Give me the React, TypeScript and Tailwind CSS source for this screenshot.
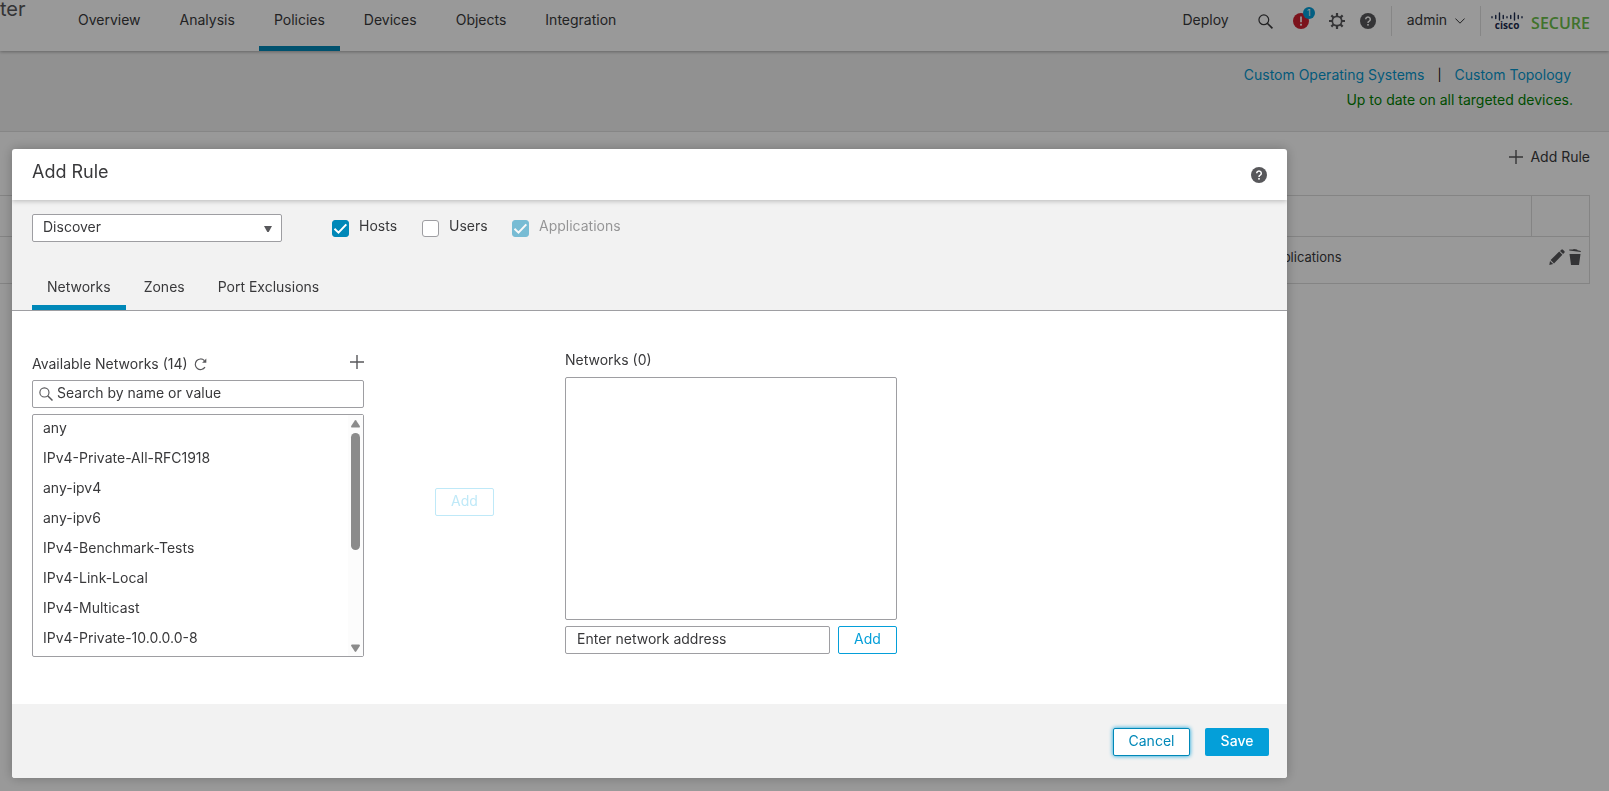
import { useState } from "react";

const navItems = ["Overview", "Analysis", "Policies", "Devices", "Objects", "Integration"];
const tabs = ["Networks", "Zones", "Port Exclusions"];
const networks = [
  "any",
  "IPv4-Private-All-RFC1918",
  "any-ipv4",
  "any-ipv6",
  "IPv4-Benchmark-Tests",
  "IPv4-Link-Local",
  "IPv4-Multicast",
  "IPv4-Private-10.0.0.0-8",
];

const SearchIcon = ({ className }: { className: string }) => (
  <svg viewBox="0 0 16 16" className={className} fill="none" stroke="currentColor">
    <circle cx="6.2" cy="6.2" r="5.2" strokeWidth="1.3" />
    <path d="M9.9 9.9 15.4 15.4" strokeWidth="1.7" />
  </svg>
);

const PlusIcon = () => (
  <svg viewBox="0 0 14 14" className="size-[14px] text-[#58585b]" fill="none" stroke="currentColor" strokeWidth="1.4">
    <path d="M7 0v14M0 7h14" />
  </svg>
);

const HelpIcon = () => (
  <svg viewBox="0 0 16 16" className="size-4 text-[#58585b]">
    <circle cx="8" cy="8" r="8" fill="currentColor" />
    <path d="M5.7 6.2a2.3 2.2 0 1 1 3.5 1.9C8.3 8.6 8 8.9 8 9.9" fill="none" stroke="#fff" strokeWidth="1.5" />
    <rect x="7.2" y="11" width="1.6" height="1.6" fill="#fff" />
  </svg>
);

const GearIcon = () => (
  <svg viewBox="0 0 16 16" className="size-4 text-[#58585b]" fill="none" stroke="currentColor">
    <circle cx="8" cy="8" r="4.7" strokeWidth="1.7" />
    <path
      d="M8 0v3M8 13v3M0 8h3M13 8h3M2.35 2.35l2.1 2.1M11.55 11.55l2.1 2.1M13.65 2.35l-2.1 2.1M4.45 11.55l-2.1 2.1"
      strokeWidth="2.2"
    />
  </svg>
);

const AlertIcon = () => (
  <svg viewBox="0 0 16 16" className="size-4">
    <circle cx="8" cy="8" r="8" fill="#cf2030" />
    <path d="M8 3.5v5.7" stroke="#fff" strokeWidth="1.7" />
    <rect x="7.1" y="10.8" width="1.8" height="1.8" fill="#fff" />
  </svg>
);

const CiscoBars = () => (
  <svg viewBox="0 0 32 9" className="h-[9px] w-8" stroke="#1b2a4e" strokeWidth="1.4" strokeLinecap="round">
    <path d="M1 4.8v1M4.75 3.5v3M8.5 1v7M12.25 3.5v3M16 4.8v1M19.75 3.5v3M23.5 1v7M27.25 3.5v3M31 4.8v1" />
  </svg>
);

const Header = () => (
  <header className="relative flex h-[51px] items-start justify-between bg-white shadow-[0_1px_3px_rgba(0,0,0,0.3)]">
    <div className="flex">
      <span className="w-[63px] text-xl leading-[18px] text-[#58585b]">ter</span>
      <nav className="flex gap-[9px]">
        {navItems.map((item) => (
          <a
            key={item}
            href="#"
            className={
              item === "Policies"
                ? "h-[51px] border-b-5 border-[#0088b8] px-[15px] leading-10"
                : "h-[51px] px-[15px] leading-10"
            }
          >
            {item}
          </a>
        ))}
      </nav>
    </div>
    <div className="flex h-[42px] items-center pr-[19px]">
      <a href="#" className="mr-[29px] pb-[2px] leading-10">Deploy</a>
      <button aria-label="Search" className="mr-5"><SearchIcon className="size-[15px]" /></button>
      <button aria-label="Notifications" className="relative mr-5">
        <AlertIcon />
        <span className="absolute -top-[6px] left-[10px] size-3 rounded-full bg-[#049fd9] text-center text-[9px] leading-3 text-white">
          1
        </span>
      </button>
      <button aria-label="Settings" className="mr-[15px]"><GearIcon /></button>
      <button aria-label="Help" className="mr-[15px]"><HelpIcon /></button>
      <button className="flex h-[30px] items-center gap-2 border-x border-[#dfdfdf] px-[15px]">
        <span className="pb-[2px]">admin</span>
        <svg viewBox="0 0 10 6" className="h-[6px] w-[10px]" fill="none" stroke="currentColor">
          <path d="M.4.5 5 5.2 9.6.5" />
        </svg>
      </button>
      <div className="ml-[10px] flex flex-col items-center">
        <CiscoBars />
        <span className="font-['Open_Sans',sans-serif] text-[10px] leading-[9px] font-bold text-[#1b2a4e]">cisco</span>
      </div>
      <span className="ml-2 pt-1 font-['Open_Sans',sans-serif] text-base leading-5 font-semibold text-[#6cc04a]">SECURE</span>
    </div>
  </header>
);

const RulesPage = () => (
  <main>
    <div className="flex h-[81px] flex-col items-end border-b border-[#dfdfdf] bg-[#f2f2f2] pt-[11px] leading-[25px]">
      <div className="flex pr-[38px]">
        <a href="#" className="text-[#0596cd]">Custom Operating Systems</a>
        <span className="w-[30px] text-center text-xs leading-[25px] text-black">|</span>
        <a href="#" className="text-[#0596cd]">Custom Topology</a>
      </div>
      <p className="pr-9 text-[#008000]">Up to date on all targeted devices.</p>
    </div>
    <div className="flex h-[63px] items-start justify-end pt-[14px] pr-[19px]">
      <button className="flex items-center gap-[7px] leading-[22px]">
        <PlusIcon />
        Add Rule
      </button>
    </div>
    <div className="pr-[19px]">
      <table className="w-full border-collapse border border-l-0 border-[#dcdcdc] text-[13px]">
        <thead>
          <tr className="h-[41px] border-b border-[#dcdcdc]">
            <th aria-label="Action" />
            <th aria-label="Edit or delete" className="w-[58px] border-l border-[#dcdcdc]" />
          </tr>
        </thead>
        <tbody>
          <tr className="h-[47px]">
            <td className="pr-[190px] pb-[6px] text-right">Applications</td>
            <td>
              <div className="flex items-center justify-end gap-1 pr-2 pb-[6px] text-[#58585b]">
                <button aria-label="Edit">
                  <svg viewBox="0 0 16 16" className="size-4" fill="currentColor">
                    <path d="M.3 15.9l.7-4 3.2 3.2zM1.6 11 10.2 2.6l3.2 3.2L5 14.4zM11 1.9 12.3.7q.8-.7 1.6 0l1.4 1.4q.8.8 0 1.6L14.1 5z" />
                  </svg>
                </button>
                <button aria-label="Delete">
                  <svg viewBox="0 0 12 16" className="h-4 w-3" fill="currentColor">
                    <path d="M.2.4 4 .5l.8-.4 3.2.5.6.6L11.8 1.9v1.2L.2 1.5zM.5 5h11l-1.5 11H2z" />
                  </svg>
                </button>
              </div>
            </td>
          </tr>
        </tbody>
      </table>
    </div>
  </main>
);

type CheckProps = {
  label: string;
  defaultChecked?: boolean;
  disabled?: boolean;
};

const Check = ({ label, defaultChecked, disabled }: CheckProps) => (
  <label className={disabled ? "flex w-[90px] items-start gap-[10px] opacity-50" : "flex w-[90px] items-start gap-[10px]"}>
    <span className="grid pt-1">
      <input
        type="checkbox"
        defaultChecked={defaultChecked}
        disabled={disabled}
        className="peer col-start-1 row-start-1 size-[17px] appearance-none rounded-[3px] border border-[#9e9ea2] bg-white checked:border-[#0088b8] checked:bg-[#0088b8]"
      />
      <svg
        viewBox="0 0 17 17"
        className="pointer-events-none invisible col-start-1 row-start-1 size-[17px] peer-checked:visible"
        fill="none"
        stroke="#fff"
        strokeWidth="2"
      >
        <path d="M2.5 8.8 6.5 12.6 14.3 4.4" />
      </svg>
    </span>
    <span className="leading-5">{label}</span>
  </label>
);

const AddRuleDialog = () => {
  const [activeTab, setActiveTab] = useState("Networks");

  return (
    <div
      role="dialog"
      aria-label="Add Rule"
      className="mt-[149px] mr-[322px] ml-3 overflow-hidden rounded-[3px] bg-white shadow-[0_0_12px_rgba(0,0,0,0.25)]"
    >
      <div className="relative flex h-[51px] items-start justify-between px-5 shadow-[0_1px_5px_rgba(0,0,0,0.25)]">
        <h2 className="text-lg leading-[46px]">Add Rule</h2>
        <button aria-label="Help" className="pt-[18px]"><HelpIcon /></button>
      </div>

      <div className="border-b border-[#9e9ea2] bg-[#f2f2f2] px-5 pt-[14px]">
        <div className="flex items-start">
          <div className="mr-[50px] grid w-[250px] items-center">
            <select
              aria-label="Action"
              className="col-start-1 row-start-1 h-7 appearance-none rounded-[2px] border border-[#9e9ea2] bg-white px-[10px] pb-[2px]"
            >
              <option>Discover</option>
              <option>Exclude</option>
            </select>
            <svg viewBox="0 0 8 6" className="pointer-events-none col-start-1 row-start-1 mt-[2px] mr-[10px] h-[6px] w-2 justify-self-end" fill="#58585b">
              <path d="M0 0h8L4.7 6H3.3z" />
            </svg>
          </div>
          <div className="flex pt-[2px]">
            <Check label="Hosts" defaultChecked />
            <Check label="Users" />
            <Check label="Applications" defaultChecked disabled />
          </div>
        </div>
        <div role="tablist" className="mt-[21px] flex gap-[3px]">
          {tabs.map((tab) => (
            <button
              key={tab}
              role="tab"
              aria-selected={tab === activeTab}
              onClick={() => setActiveTab(tab)}
              className={
                tab === activeTab
                  ? "h-[47px] border-b-5 border-[#0088b8] px-[15px] pt-[6px]"
                  : "h-[47px] border-b-5 border-transparent px-[15px] pt-[6px]"
              }
            >
              {tab}
            </button>
          ))}
        </div>
      </div>

      <div className="flex px-5 pt-8 pb-[47px]">
        <section className="w-[332px] pt-[5px]">
          <div className="flex h-8 items-center">
            <h3>Available Networks (14)</h3>
            <button aria-label="Reload" className="ml-[6px]">
              <svg viewBox="0 0 13 13" className="size-[13px] text-[#58585b]" fill="none" stroke="currentColor" strokeWidth="1.2">
                <path d="M11 9.2A5.3 5.3 0 1 1 10.4 2.6" />
                <path d="M12.3.5v4.2H8.1z" fill="currentColor" stroke="none" />
              </svg>
            </button>
            <button aria-label="Add network" className="ml-auto pb-1"><PlusIcon /></button>
          </div>
          <label className="flex h-7 items-center gap-1 rounded-[2px] border border-[#9e9ea2] px-[6px]">
            <SearchIcon className="size-[14px] text-[#58585b]" />
            <input
              type="text"
              aria-label="Search networks"
              placeholder="Search by name or value"
              className="flex-1 pb-[2px] outline-none placeholder:text-[#39393b]"
            />
          </label>
          <div className="mt-[6px] flex h-[243px] rounded-[2px] border border-[#9e9ea2]">
            <ul className="flex-1 overflow-hidden">
              {networks.map((name) => (
                <li key={name} className="h-[30px] px-[10px] leading-[26px]">{name}</li>
              ))}
            </ul>
            <div className="flex w-[15px] flex-col items-center bg-[#fcfcfc] pt-[5px] pb-1">
              <svg viewBox="0 0 9 8" className="h-2 w-[9px]" fill="#8b8b8b">
                <path d="M3.8.4q.7-.8 1.4 0L8.8 6q.5 1.5-1 1.5H1.2Q-.3 7.5.2 6z" />
              </svg>
              <div className="mt-[5px] h-[117px] w-[9px] rounded-full bg-[#8b8b8b]" />
              <svg viewBox="0 0 9 8" className="mt-auto h-2 w-[9px]" fill="#8b8b8b">
                <path d="M3.8 7.6q.7.8 1.4 0L8.8 2q.5-1.5-1-1.5H1.2Q-.3.5.2 2z" />
              </svg>
            </div>
          </div>
        </section>

        <div className="flex items-center px-[71px] pt-1">
          <button disabled className="h-7 w-[59px] rounded-[2px] border border-[#bfe9f8] pb-[2px] text-[#bfe9f8]">
            Add
          </button>
        </div>

        <section className="w-[332px]">
          <h3 className="h-[34px] leading-[34px]">Networks (0)</h3>
          <div className="h-[243px] rounded-[2px] border border-[#9e9ea2]" />
          <div className="mt-[6px] flex gap-2">
            <input
              type="text"
              aria-label="Network address"
              placeholder="Enter network address"
              className="h-7 min-w-0 flex-1 rounded-[2px] border border-[#9e9ea2] px-[11px] pb-1 placeholder:text-[#39393b]"
            />
            <button className="h-7 w-[59px] rounded-[2px] border border-[#049fd9] pb-[2px] text-[#049fd9]">Add</button>
          </div>
        </section>
      </div>

      <div className="flex justify-end gap-[15px] bg-[#f2f2f2] pt-6 pr-[18px] pb-[22px]">
        <button className="h-7 w-[77px] rounded-[2px] border border-[#0088b8] bg-white pb-[2px] text-[#0088b8] shadow-[0_0_4px_#049fd9]">
          Cancel
        </button>
        <button className="h-7 w-16 rounded-[2px] bg-[#049fd9] pb-[2px] font-medium text-white">Save</button>
      </div>
    </div>
  );
};

export default function App() {
  return (
    <div className="min-h-screen bg-white font-[Inter,sans-serif] text-sm text-[#39393b]">
      <Header />
      <RulesPage />
      <div className="fixed inset-0 overflow-auto bg-black/40">
        <AddRuleDialog />
      </div>
    </div>
  );
}
